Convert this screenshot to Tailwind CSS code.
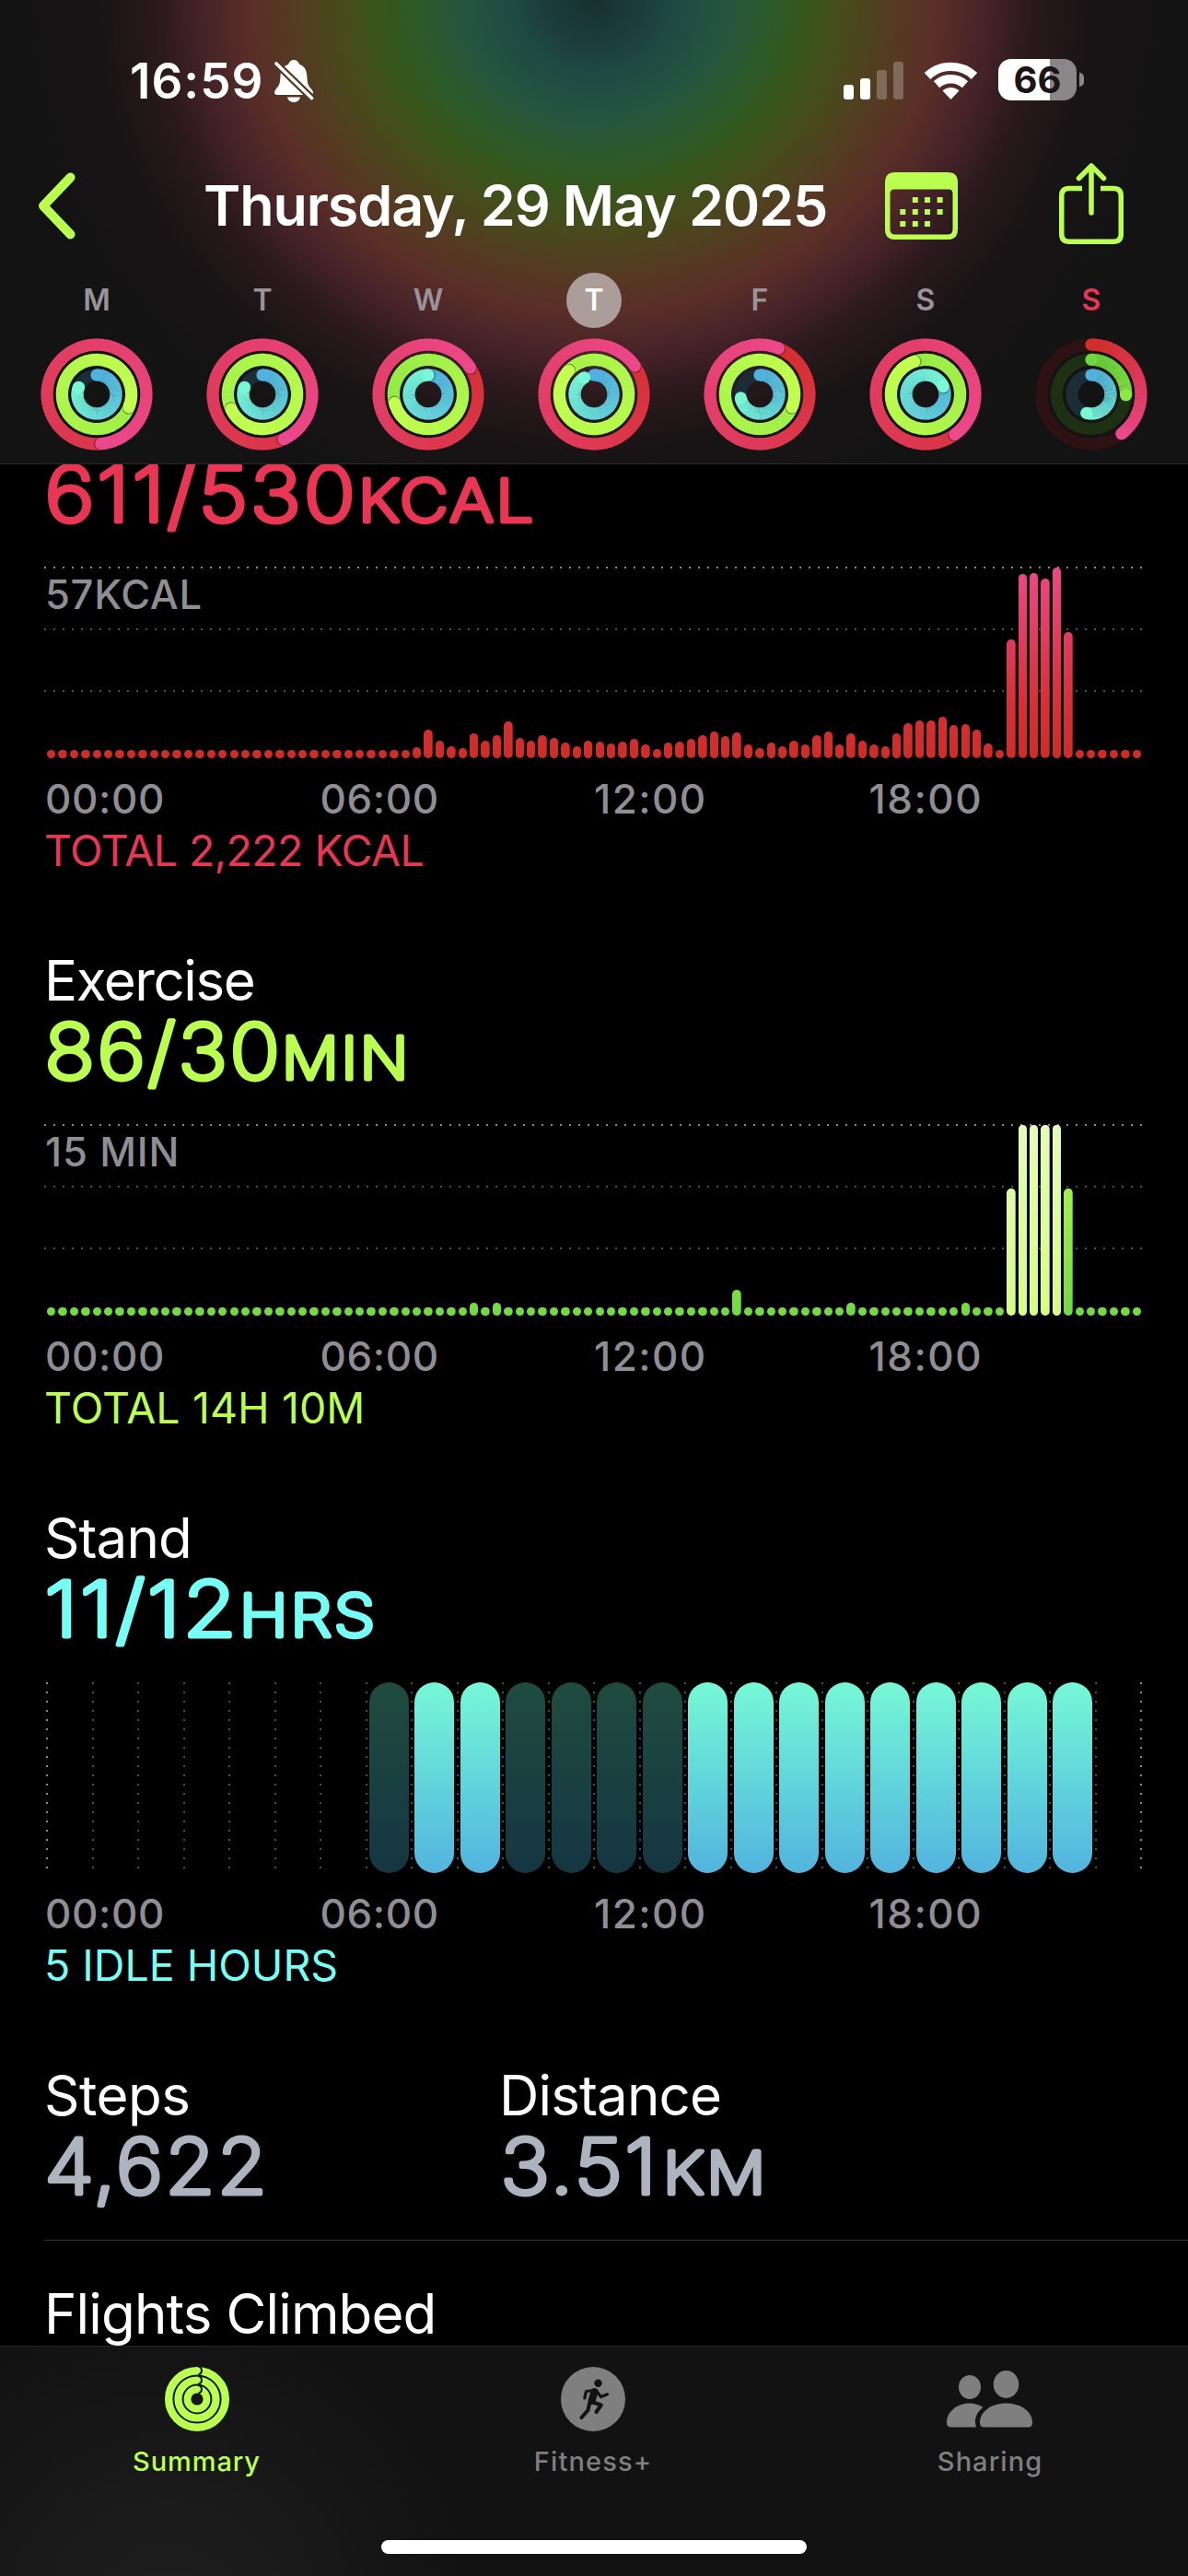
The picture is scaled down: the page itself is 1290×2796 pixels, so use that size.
<!DOCTYPE html>
<html lang="en">
<head>
<meta charset="UTF-8">
<meta name="viewport" content="width=device-width, initial-scale=1.0">
<title>Activity</title>
<script src="https://cdn.jsdelivr.net/npm/@tailwindcss/browser@4"></script>
</head>
<body class="bg-black text-white font-['Inter',sans-serif]">
<div class="relative w-[1290px] h-[2796px] flex flex-col overflow-hidden">

  <!-- Header -->
  <header class="h-[504px] shrink-0 border-b border-[#2b2b2b] bg-[radial-gradient(640px_580px_at_645px_0px,#18302f_0,#1b3a3c_7%,#1f4a43_14%,#255440_21.9%,#2c5a2a_29.7%,#36561c_35.6%,#464c1b_42%,#553a22_51.6%,#5a2e28_58.6%,#442228_67.2%,#2a191d_74.2%,#181415_84.4%,#131313_100%)]">
    <!-- Status bar -->
    <div class="h-[176px] flex items-center pl-[141px]">
      <span class="text-[53px] leading-none font-semibold tracking-[1px] w-[157px] whitespace-nowrap">16:59</span>
      <svg class="w-[43px] h-[46px]" viewBox="0 0 43 46" fill="white">
        <defs>
          <mask id="bell-cut">
            <rect width="43" height="46" fill="white"/>
            <path d="M3 5L41 42" stroke="black" stroke-width="8"/>
          </mask>
        </defs>
        <g mask="url(#bell-cut)">
          <path d="M21 0c-3 0-5 2-6 5c-6 2-8 6-8.500 12c-.4 8-1 11-4.500 14C1 33 0 34 0 35.500c0 1.500 1 2.500 3 2.500h36c2 0 3-1 3-2.500c0-1.500-1-2.500-2.500-4.500c-3-3-3.800-6-4.200-14c-.5-6-2.500-10-8-12c-1-3-3.300-5-6.300-5z"/>
        </g>
        <path d="M14 40.500h14c-.5 3-3.500 5.500-7 5.500s-6.500-2.500-7-5.500z"/>
        <path d="M2 4L40.500 41.500" stroke="white" stroke-width="3.600" stroke-linecap="round"/>
      </svg>
      <div class="ml-[575px] mt-[-3px] h-[42px] flex items-end gap-[7px]">
        <div class="w-[11px] h-4 rounded-[3px] bg-white"></div>
        <div class="w-[11px] h-[23px] rounded-[3px] bg-white"></div>
        <div class="w-[11px] h-8 rounded-[3px] bg-white/25"></div>
        <div class="w-[11px] h-[41px] rounded-[3px] bg-white/25"></div>
      </div>
      <svg class="ml-[23px] mt-[-3px] w-[57px] h-[42px]" viewBox="0 0 57 42" fill="none" stroke="white" stroke-width="9.400">
        <path d="M3 16.500A37.300 37.300 0 0 1 54 16.500"/>
        <path d="M13 25.700A23.300 23.300 0 0 1 44 25.700"/>
        <path d="M28.500 42L19.500 32.500A13 13 0 0 1 37.500 32.500Z" fill="white" stroke="none"/>
      </svg>
      <div class="ml-[23px] mt-[-3px] w-[85px] h-[45px] rounded-[14px] bg-[linear-gradient(90deg,#fff_56px,#8b8788_56px)] flex items-center justify-center">
        <span class="text-[40px] leading-none font-bold text-[#1c1415]">66</span>
      </div>
      <div class="ml-[3px] mt-[-3px] w-[5px] h-[15px] rounded-r-full bg-[#8b8788]"></div>
    </div>

    <!-- Navigation -->
    <div class="h-[94px] flex items-center pl-[41px]">
      <svg class="w-[41px] h-[73px]" viewBox="0 0 41 73" fill="none" stroke="#baff4f" stroke-width="10" stroke-linecap="round" stroke-linejoin="round">
        <path d="M35.500 5.500L6 36.500L35.500 67.500"/>
      </svg>
      <h1 class="ml-[139px] w-[740px] text-[61px] leading-none font-semibold tracking-[-1.100px] whitespace-nowrap">Thursday, 29 May 2025</h1>
      <svg class="w-[79px] h-[73px]" viewBox="0 0 79 73" fill="#baff4f">
        <path fill-rule="evenodd" d="M11 0H68Q79 0 79 11V62Q79 73 68 73H11Q0 73 0 62V11Q0 0 11 0ZM10 18.500Q5.500 18.500 5.500 23V62Q5.500 67.500 11 67.500H68Q73.500 67.500 73.500 62V23Q73.500 18.500 69 18.500Z"/>
        <path d="M29.800 27h6v6h-6zM43 27h6v6h-6zM56.600 27h6v6h-6zM16.300 40h6v6h-6zM29.800 40h6v6h-6zM43 40h6v6h-6zM56.600 40h6v6h-6zM16.300 53h6v6h-6zM29.800 53h6v6h-6zM43 53h6v6h-6z"/>
      </svg>
      <svg class="ml-[110px] mt-[-4px] w-[70px] h-[88px]" viewBox="0 0 70 88" fill="none" stroke="#baff4f" stroke-width="5.500">
        <path d="M25 27.500H11Q2.750 27.500 2.750 35.500V77Q2.750 85.250 11 85.250H59Q67.250 85.250 67.250 77V35.500Q67.250 27.500 59 27.500H45"/>
        <path d="M35 54V3.500M21.500 16.500L35 3L48.500 16.500" stroke-linecap="round" stroke-linejoin="round"/>
      </svg>
    </div>

    <!-- Week strip -->
    <div id="week" class="grid grid-cols-7 px-[15px] pt-[26px]"></div>
  </header>

  <!-- Day detail -->
  <main class="h-[2042px] shrink-0 overflow-hidden pl-12">
    <section class="mt-[-9px] mb-[77px]">
      <svg class="block overflow-visible w-[1192px] h-[121px] tracking-[2.500px]" fill="#e83654" stroke="#e83654" stroke-width="5" stroke-linejoin="round" font-weight="200">
        <text x="0.500" y="70.500" font-size="83" textLength="340" lengthAdjust="spacingAndGlyphs">611/530</text>
        <text x="341" y="70.500" font-size="63" textLength="193" lengthAdjust="spacingAndGlyphs">KCAL</text>
      </svg>
      <div class="relative w-[1192px] h-[207px]">
        <div class="absolute top-[-1px] w-full h-[2px] bg-[repeating-linear-gradient(90deg,#8a8a8a_0_2px,transparent_2px_10px)]"></div>
        <div class="absolute top-[66px] w-full h-[2px] bg-[repeating-linear-gradient(90deg,#505050_0_2px,transparent_2px_10px)]"></div>
        <div class="absolute top-[133px] w-full h-[2px] bg-[repeating-linear-gradient(90deg,#505050_0_2px,transparent_2px_10px)]"></div>
        <span class="absolute left-px top-[5px] text-[43.500px] leading-[48px] font-[550] tracking-[0.700px] text-[#8e8e93]">57KCAL</span>
        <div id="move-bars" class="relative h-full flex items-end justify-between pl-[3px] pr-[1px]"></div>
      </div>
      <div class="mt-5 w-[1194px] grid grid-cols-4 text-[44px] leading-[48px] font-[550] tracking-[0.600px] text-[#8e8e93]">
        <span class="pl-px">00:00</span><span class="pl-px">06:00</span><span class="tracking-[1.400px]">12:00</span><span class="tracking-[1.500px]">18:00</span>
      </div>
      <p class="mt-1 text-[46.500px] leading-[56px] tracking-[-0.570px] text-[#e83654]">TOTAL 2,222 KCAL</p>
    </section>

    <section class="mb-[77px]">
      <h2 class="text-[60px] leading-[72px] tracking-[-1.400px]">Exercise</h2>
      <svg class="block overflow-visible w-[1192px] h-[121px] tracking-[2.500px]" fill="#baff4f" stroke="#baff4f" stroke-width="5" stroke-linejoin="round" font-weight="200">
        <text x="0.500" y="70.500" font-size="83" textLength="258" lengthAdjust="spacingAndGlyphs">86/30</text>
        <text x="258" y="70.500" font-size="63" textLength="140" lengthAdjust="spacingAndGlyphs">MIN</text>
      </svg>
      <div class="relative w-[1192px] h-[207px]">
        <div class="absolute top-[-1px] w-full h-[2px] bg-[repeating-linear-gradient(90deg,#8a8a8a_0_2px,transparent_2px_10px)]"></div>
        <div class="absolute top-[66px] w-full h-[2px] bg-[repeating-linear-gradient(90deg,#505050_0_2px,transparent_2px_10px)]"></div>
        <div class="absolute top-[133px] w-full h-[2px] bg-[repeating-linear-gradient(90deg,#505050_0_2px,transparent_2px_10px)]"></div>
        <span class="absolute left-px top-[5px] text-[43.500px] leading-[48px] font-[550] tracking-[0.900px] text-[#8e8e93]">15 MIN</span>
        <div id="exercise-bars" class="relative h-full flex items-end justify-between pl-[3px] pr-[1px]"></div>
      </div>
      <div class="mt-5 w-[1194px] grid grid-cols-4 text-[44px] leading-[48px] font-[550] tracking-[0.600px] text-[#8e8e93]">
        <span class="pl-px">00:00</span><span class="pl-px">06:00</span><span class="tracking-[1.400px]">12:00</span><span class="tracking-[1.500px]">18:00</span>
      </div>
      <p class="mt-1 text-[46.500px] leading-[56px] tracking-[0.100px] text-[#baff4f]">TOTAL 14H 10M</p>
    </section>

    <section class="mb-[77px]">
      <h2 class="text-[60px] leading-[72px] tracking-[-0.900px]">Stand</h2>
      <svg class="block overflow-visible w-[1192px] h-[121px] tracking-[2.500px]" fill="#76fff5" stroke="#76fff5" stroke-width="5" stroke-linejoin="round" font-weight="200">
        <text x="0.500" y="70.500" font-size="83" textLength="211" lengthAdjust="spacingAndGlyphs">11/12</text>
        <text x="212" y="70.500" font-size="63" textLength="150" lengthAdjust="spacingAndGlyphs">HRS</text>
      </svg>
      <div class="relative w-[1192px] h-[207px]">
        <div id="stand-grid" class="absolute left-[2px] top-0 w-[1190px] h-[202px] flex justify-between"></div>
        <div id="stand-bars" class="relative h-full flex gap-[6.500px] pl-[6px]"></div>
      </div>
      <div class="mt-5 w-[1194px] grid grid-cols-4 text-[44px] leading-[48px] font-[550] tracking-[0.600px] text-[#8e8e93]">
        <span class="pl-px">00:00</span><span class="pl-px">06:00</span><span class="tracking-[1.400px]">12:00</span><span class="tracking-[1.500px]">18:00</span>
      </div>
      <p class="mt-1 text-[46.500px] leading-[56px] text-[#76fff5]">5 IDLE HOURS</p>
    </section>

    <section class="grid grid-cols-[494px_1fr]">
      <div>
        <h2 class="text-[60px] leading-[72px] tracking-[-0.500px]">Steps</h2>
        <svg class="block overflow-visible w-[480px] h-[121px] tracking-[2.500px]" fill="#aeb3c0" stroke="#aeb3c0" stroke-width="5" stroke-linejoin="round" font-weight="200">
          <text x="0.500" y="70.500" font-size="83" textLength="244" lengthAdjust="spacingAndGlyphs">4,622</text>
        </svg>
      </div>
      <div>
        <h2 class="text-[60px] leading-[72px] tracking-[-0.830px]">Distance</h2>
        <svg class="block overflow-visible w-[480px] h-[121px] tracking-[2.500px]" fill="#aeb3c0" stroke="#aeb3c0" stroke-width="5" stroke-linejoin="round" font-weight="200">
          <text x="1.500" y="70.500" font-size="83" textLength="172" lengthAdjust="spacingAndGlyphs">3.51</text>
          <text x="178" y="70.500" font-size="63" textLength="114" lengthAdjust="spacingAndGlyphs">KM</text>
        </svg>
      </div>
    </section>
    <section class="border-t border-[#38383a] pt-[43px]">
      <h2 class="text-[60px] leading-[72px] tracking-[-0.850px]">Flights Climbed</h2>
    </section>
  </main>

  <!-- Tab bar -->
  <nav class="relative h-[250px] shrink-0 border-t border-[#262626] bg-[#121212] bg-[radial-gradient(circle_at_180px_300px,#202020_0,#121212_330px)] grid grid-cols-3 pt-[22px] text-[29px] leading-9 font-medium text-[#7f7f7f]">
    <div class="flex flex-col items-center pr-[3px] text-[#baff4f]">
      <svg class="w-[70px] h-[70px]" viewBox="-35 -35 70 70" fill="none" stroke="#baff4f">
        <circle r="30.800" stroke-width="8.400"/>
        <circle r="20.500" stroke-width="8.200"/>
        <circle r="10.500" stroke-width="7.800"/>
        <g stroke="#121212" stroke-width="2">
          <path d="M1 -35.500A4.600 4.600 0 0 1 1.500 -26.500"/>
          <path d="M1 -25A4.300 4.300 0 0 1 1.500 -16.500"/>
          <path d="M1 -15A4.300 4.300 0 0 1 1.500 -6.500"/>
        </g>
      </svg>
      <span class="mt-[15px] tracking-[0.900px]">Summary</span>
    </div>
    <div class="flex flex-col items-center pr-[2px]">
      <svg class="w-[70px] h-[70px]" viewBox="0 0 70 70" fill="none" stroke="#121212" stroke-linecap="round" stroke-linejoin="round">
        <circle cx="35" cy="35" r="35" fill="#7f7f7f" stroke="none"/>
        <circle cx="40.500" cy="17.800" r="4.200" fill="#121212" stroke="none"/>
        <path d="M36.500 27L33.500 37" stroke-width="8"/>
        <path d="M36 25.500L27.500 26.500L25.800 34" stroke-width="3.200"/>
        <path d="M38.500 26L43.500 32.500L50.500 29.800" stroke-width="3.200"/>
        <path d="M35 38.500L43.800 41.500L38.500 49" stroke-width="4"/>
        <path d="M31 40L29.500 47L22.500 55" stroke-width="4"/>
      </svg>
      <span class="mt-[15px] tracking-[1.150px]">Fitness+</span>
    </div>
    <div class="flex flex-col items-center">
      <svg class="w-[94px] h-[70px]" viewBox="0 0 94 70" fill="#7f7f7f">
        <ellipse cx="25" cy="22" rx="12" ry="13"/>
        <ellipse cx="64.500" cy="19" rx="13.800" ry="15"/>
        <path d="M36 60.500C36 49 48 39.500 64.500 39.500S93 49 93 60.500Q93 65.500 88.500 65.500H40.500Q36 65.500 36 60.500Z"/>
        <path d="M0 60.500C0 49 11 39.500 25 39.500Q33 39.500 39.500 44Q28 53 32 65.500H4.500Q0 65.500 0 60.500Z"/>
      </svg>
      <span class="mt-[15px] tracking-[1.050px]">Sharing</span>
    </div>
    <div class="absolute left-[414px] bottom-6 w-[462px] h-[15px] rounded-full bg-white"></div>
  </nav>
</div>

<script>
  // Progress per ring, 1 = one full lap
  const days = [
    { label: 'M', move: 1.486, exercise: 2.31, stand: 0.81 },
    { label: 'T', move: 1.430, exercise: 2.68, stand: 0.81 },
    { label: 'W', move: 1.160, exercise: 1.71, stand: 1.0 },
    { label: 'T', move: 1.153, exercise: 2.87, stand: 0.917, selected: true },
    { label: 'F', move: 1.062, exercise: 2.31, stand: 0.72 },
    { label: 'S', move: 1.400, exercise: 1.947, stand: 1.185 },
    { label: 'S', move: 0.396, exercise: 0.253, stand: 0.54, today: true }
  ];
  const rings = [
    { key: 'move', r: 53.9, from: [210, 45, 40], to: [236, 72, 140], track: '#2e1113' },
    { key: 'exercise', r: 37.6, from: [110, 218, 62], to: [196, 255, 80], track: '#1d3014' },
    { key: 'stand', r: 21, from: [80, 176, 222], to: [120, 248, 213], track: '#1b2d37' }
  ];

  const point = (t, r) => {
    const a = t * Math.PI * 2;
    return [Math.sin(a) * r, -Math.cos(a) * r];
  };

  function drawRing(ring, p) {
    const w = 13.2;
    const start = Math.max(0, p - 1);
    const color = t => {
      // a short exercise arc stays in the darker part of its gradient
      const k = t / Math.max(p, ring.key === 'exercise' ? 0.7 : 0);
      return `rgb(${ring.from.map((c, i) => Math.round(c + (ring.to[i] - c) * k)).join(',')})`;
    };
    const cap = (t, fill, extra = '') => {
      const [x, y] = point(t, ring.r);
      return `<circle cx="${x}" cy="${y}" r="${w / 2}" fill="${fill}" ${extra}/>`;
    };
    let out = `<circle r="${ring.r}" fill="none" stroke="${ring.track}" stroke-width="${w}"/>`;
    if (p < 1) out += cap(0, color(0));
    const steps = 90;
    const len = (p - start) / steps;
    for (let i = 0; i < steps; i++) {
      const t = start + i * len;
      const [x1, y1] = point(t, ring.r);
      const [x2, y2] = point(t + len * (i < steps - 1 ? 1.3 : 1), ring.r);
      out += `<path d="M${x1} ${y1}A${ring.r} ${ring.r} 0 0 1 ${x2} ${y2}" fill="none" stroke="${color(t)}" stroke-width="${w}"/>`;
    }
    if (p >= 1) out += cap(p + 1.3 / (ring.r * 6.28), '#000', 'fill-opacity="0.35"');
    return out + cap(p, color(p));
  }

  document.getElementById('week').innerHTML = days.map(d => {
    const badge = d.selected ? 'bg-[#ab9d9a] text-white' : d.today ? 'text-[#e83654]' : 'text-[#98949a]';
    return `
      <div class="flex flex-col items-center">
        <span class="w-[60px] h-[60px] rounded-full flex items-center justify-center text-[32px] leading-none font-semibold ${badge}">${d.label}</span>
        <svg class="mt-[11px] w-[122px] h-[122px]" viewBox="-61 -61 122 122">${rings.map(r => drawRing(r, d[r.key])).join('')}</svg>
      </div>`;
  }).join('');

  // 15 minute buckets, bar height in px
  const dots = n => Array(n).fill(9);
  const move = [
    ...dots(32), 12, 31, 18.7, 13.3, 11.3, 26.7, 18.7, 25, 39.7, 21.7, 18.7, 25, 22, 17.3, 13, 19.3,
    17.7, 16, 18.3, 21, 15, 9.7, 17, 17.7, 20.7, 25, 29, 23.7, 28, 15, 11.3, 17.3, 13, 18.7, 15, 24.7,
    28.7, 15, 26.7, 19.3, 15.3, 13, 27, 38, 40.7, 40.7, 45, 35.7, 37.3, 30.7, 15.7, 9,
    128.7, 199.7, 201.3, 194.7, 207, 137, ...dots(6)
  ];
  const exercise = dots(96);
  Object.assign(exercise, { 37: 14, 39: 14, 60: 28, 70: 14, 80: 14, 84: 138, 85: 207, 86: 207, 87: 207, 88: 207, 89: 138 });

  const bar = (h, fill) => `<div class="w-[9.400px] rounded-full bg-[length:100%_207px] bg-bottom bg-no-repeat ${fill}" style="height:${h}px"></div>`;
  document.getElementById('move-bars').innerHTML = move
    .map(h => bar(h, 'bg-[linear-gradient(to_top,#cf2c27,#d73038_30%,#ec4889)]')).join('');
  document.getElementById('exercise-bars').innerHTML = exercise
    .map((h, i) => bar(h, i >= 84 && i <= 88
      ? 'bg-[linear-gradient(to_top,#d6fc86,#e3fcba)]'
      : 'bg-[linear-gradient(to_top,#70da40,#baff4f)]')).join('');

  // 24 hours: 1 = stood, 0 = idle, null = no data
  const stand = [null, null, null, null, null, null, null, 0, 1, 1, 0, 0, 0, 0, 1, 1, 1, 1, 1, 1, 1, 1, 1, null];
  document.getElementById('stand-bars').innerHTML = stand.map(v => {
    const fill = v === null ? '' : v ? 'bg-linear-to-b from-[#76f8d5] to-[#52b4de]' : 'bg-linear-to-b from-[#1f4b3f] to-[#153642]';
    return `<div class="w-[43px] shrink-0 rounded-full ${fill}"></div>`;
  }).join('');
  document.getElementById('stand-grid').innerHTML = Array.from({ length: 25 }, (_, i) => i % 24 === 0
    ? '<div class="w-[2px] bg-[repeating-linear-gradient(180deg,#8a8a8a_0_2px,transparent_2px_10px)]"></div>'
    : '<div class="w-[2px] bg-[repeating-linear-gradient(180deg,#505050_0_2px,transparent_2px_10px)]"></div>').join('');
</script>
</body>
</html>
